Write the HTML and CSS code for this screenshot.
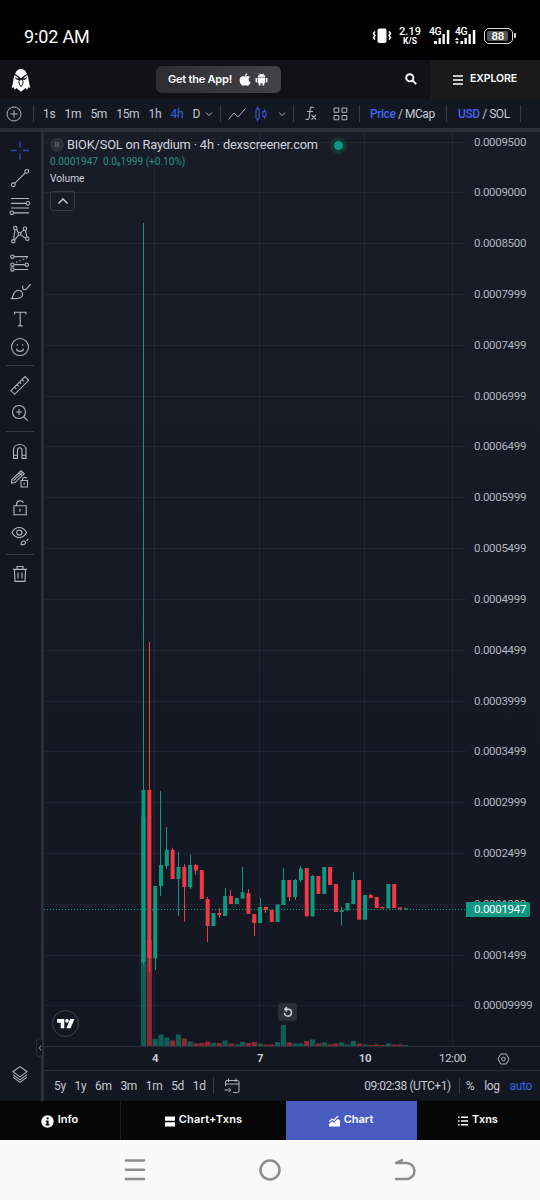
FILE: index.html
```html
<!DOCTYPE html>
<html lang="en">
<head>
    <meta charset="utf-8">
    <title>BIOK/SOL on Raydium - Chart</title>
    <link rel="stylesheet" href="styles.css">
</head>
<body>
    <div class="status-bar">
        <div class="clock">9:02 AM</div>
        <div class="status-icons">
            <svg class="vibrate" width="20" height="18" viewBox="0 0 20 18">
                <rect x="5.500" y="1.500" width="9" height="14.500" rx="2" fill="#fff"/>
                <path d="M3 4.500l-1.500 2 1.500 2-1.500 2 1.500 2M17 4.500l1.500 2-1.500 2 1.500 2-1.500 2" fill="none" stroke="#fff" stroke-width="1.500"/>
            </svg>
            <div class="speed"><b>2.19</b><span>K/S</span></div>
            <div class="signal">
                <span>4G</span>
                <svg width="22" height="18" viewBox="0 0 22 18" fill="#fff"><path d="M5 14h3v3H5zM9.500 11h2.300v6H9.500zM13.500 7h2.300v10h-2.300zM17.800 3h2.500v14h-2.500z"/></svg>
            </div>
            <div class="signal">
                <span>4G</span>
                <svg width="22" height="18" viewBox="0 0 22 18" fill="#fff"><path d="M0 13l2-2.500L4 13zM0 14.500h4L2 17zM5.500 14h2.500v3H5.500zM9.500 11h2.300v6H9.500zM13.500 7h2.300v10h-2.300zM17.800 3h2.500v14h-2.500z"/></svg>
            </div>
            <div class="battery"><span>88</span></div>
        </div>
    </div>

    <header class="header">
        <svg class="logo" width="20" height="24" viewBox="0 0 20 24">
            <path d="M4.500 5Q6 1 10 1t5.500 4l1.700 4.500L19.200 20l-2-.8-.9 2.500-2-1.700-1.500 1.500L10 23.700l-2.800-2.200L5.700 20l-2 1.700-.9-2.500-2 .8L2.800 9.500z" fill="#fff"/>
            <path d="M3.700 5.800L8.300 8.700 10 10.500l1.700-1.800 4.600-2.900-.3 1.500-3.300 2.400-.2.700 2.300-.5 1.200-1.200-.6 2.300-2.200 1-1.200-.2.600 2.200-.8 2.700L10 19.200l-1.800-2.500-.8-2.700.6-2.200-1.200.2-2.200-1L4 8.700l1.200 1.200 2.300.5-.2-.7L4 7.300z" fill="#111116"/>
            <path d="M10 11.400l1.500 1.800-.3 2.800L10 18l-1.200-2-.3-2.800z" fill="#fff"/>
        </svg>
        <div class="get-app">
            <span>Get the App!</span>
            <svg width="12" height="13" viewBox="0 0 12 13" fill="#fff">
                <path d="M8.300.2c.1 1.500-1 2.700-2.400 2.700C5.800 1.600 6.900.3 8.300.2zM6.200 3.600c.6 0 1.300-.6 2.400-.6 1 0 1.900.5 2.400 1.200-2.100 1.300-1.700 4.100.5 5-.5 1.500-1.700 3.500-2.900 3.500-.9 0-1.200-.5-2.300-.5s-1.400.5-2.200.5C2.500 12.700.6 9.700.6 7.200.6 4.700 2.100 3.200 3.800 3.200c1 0 1.700.4 2.400.4z"/>
            </svg>
            <svg width="13" height="13" viewBox="0 0 13 13" fill="#fff">
                <path d="M2.800 4.400C2.900 3 3.600 2.100 4.500 1.600L3.800.4l.4-.2.700 1.200c1-.4 2.200-.4 3.200 0L8.800.2l.4.2-.7 1.200c.9.500 1.600 1.400 1.700 2.800zM2.800 5h7.400v5.200h-1v2.200H7.500v-2.200h-2v2.200H3.800v-2.200h-1zM.6 5h1.500v4.300H.6zM10.900 5h1.500v4.300h-1.500z"/>
                <circle cx="4.900" cy="3" r=".45" fill="#35353b"/><circle cx="8.100" cy="3" r=".45" fill="#35353b"/>
            </svg>
        </div>
        <svg class="search" width="12" height="12" viewBox="0 0 12 12" fill="none" stroke="#fff" stroke-width="1.900">
            <circle cx="4.800" cy="4.800" r="3.600"/><path d="M7.500 7.500l3.700 3.700"/>
        </svg>
        <div class="explore">
            <svg width="10" height="10" viewBox="0 0 10 10" stroke="#fff" stroke-width="1.400"><path d="M0 1h10M0 5h10M0 9h10"/></svg>
            <span>EXPLORE</span>
        </div>
    </header>

    <div class="toolbar">
        <svg class="add" width="16" height="16" viewBox="0 0 16 16"><circle cx="8" cy="8" r="7"/><path d="M8 4.300v7.400M4.300 8h7.400"/></svg>
        <i class="sep"></i>
        <div class="intervals">
            <span>1s</span><span>1m</span><span>5m</span><span>15m</span><span>1h</span><span class="active">4h</span><span>D</span>
        </div>
        <svg class="chevron" width="8" height="6" viewBox="0 0 8 6"><path d="M1 1.500l3 3 3-3"/></svg>
        <i class="sep"></i>
        <svg class="line-type" width="18" height="14" viewBox="0 0 18 14"><path d="M.5 12.500L6 6l4 4 7.500-8.500"/></svg>
        <svg class="candle-type" width="12" height="16" viewBox="0 0 12 16"><path d="M1 3h3.200v10H1zM2.600.5V3M2.600 13v2.500M7.800 5.500H11v5H7.800zM9.400 3v2.500M9.400 10.500V13"/></svg>
        <svg class="chevron" width="8" height="6" viewBox="0 0 8 6"><path d="M1 1.500l3 3 3-3"/></svg>
        <i class="sep"></i>
        <svg class="fx" width="12" height="15" viewBox="0 0 12 15"><path d="M8.700 1.500C6.500.2 5.300 1.500 5.100 3.500L4.300 11c-.2 2.300-1.600 3.200-3.600 2M2 5.500h6M6.500 9l4.500 4.500M11 9l-4.500 4.500"/></svg>
        <svg class="layouts" width="15" height="14" viewBox="0 0 15 14"><path d="M1 1h4.800v4.300H1zM9 1h4.800v4.300H9zM1 8.500h4.800v4.300H1zM9 8.500h4.800v4.300H9z"/></svg>
        <i class="sep"></i>
        <div class="toggle price"><b>Price</b> / MCap</div>
        <i class="sep"></i>
        <div class="toggle currency"><b>USD</b> / SOL</div>
        <i class="sep"></i>
    </div>

    <main class="workspace">
        <aside class="tools">
            <svg class="cross" viewBox="0 0 28 28"><path d="M4.700 14.500h6M17 14.500h6M14 5.500v6M14 17.500v6M14 14.500h.5"/></svg>
            <svg viewBox="0 0 28 28"><path d="M8.700 19.300L19.300 8.700"/><circle cx="7.300" cy="20.700" r="1.900"/><circle cx="20.700" cy="7.300" r="1.900"/></svg>
            <svg viewBox="0 0 28 28"><path d="M5 6.500h18M5 11.300h15M5 16h18M7.700 20.800H23"/><circle cx="21.900" cy="11.300" r="1.800"/><circle cx="5.800" cy="20.800" r="1.800"/></svg>
            <svg viewBox="0 0 28 28"><path d="M7.500 19.500L9 10M10.500 9.500l2 3M14.800 12.500l3-2.700M19.400 10.500l1.500 6.500M8.500 20l4-5M14.800 14.800l5 3.500"/><circle cx="7.300" cy="21.300" r="1.700"/><circle cx="9.300" cy="8" r="1.700"/><circle cx="13.500" cy="13.700" r="1.500"/><circle cx="19" cy="8.700" r="1.700"/><circle cx="21.300" cy="18.700" r="1.700"/></svg>
            <svg viewBox="0 0 28 28"><path d="M8.300 7.600H22M8.300 15.600h10.500M8.300 20.400H22"/><path d="M10 13.500l11.500-5" stroke-dasharray="1.500 2.200"/><circle cx="6.400" cy="7.600" r="1.700"/><circle cx="6.400" cy="15.600" r="1.700"/><circle cx="6.400" cy="20.400" r="1.700"/><circle cx="20.700" cy="15.600" r="1.700"/></svg>
            <svg viewBox="0 0 28 28"><path d="M5.500 21.500c1.200-1 1.500-3 2.300-5 1.200-2.700 4-4 6.500-2.800 2.700 1.300 3 4.400 1 6.300-2 1.800-5.500 1.600-9.800 1.500zM16.500 8.500c-.2 3 1 4.500 3 4 1.500-.4 2.800-3.300 5-5.300"/></svg>
            <svg viewBox="0 0 28 28"><path d="M8.500 9.500V7.200h11.500v2.300M14.200 7.200v13.600M12 20.800h4.500"/></svg>
            <svg viewBox="0 0 28 28"><circle cx="14" cy="14" r="8.500"/><path d="M10.500 15.500c.5 3.700 6.500 3.700 7 0M11.300 11.300v1.500M16.700 11.300v1.500"/></svg>
            <hr>
            <svg viewBox="0 0 28 28"><path d="M5 19.500L19 5.500l3.700 3.700-14 14zM8.500 16l1.800 1.800M11 13.500l1.800 1.800M13.500 11l1.800 1.800M16 8.500l1.800 1.800"/></svg>
            <svg viewBox="0 0 28 28"><circle cx="13" cy="13" r="6.500"/><path d="M17.700 17.700l4 3.800M10 13h6M13 10v6"/></svg>
            <hr>
            <svg viewBox="0 0 28 28"><path d="M7.500 21.300V13c0-7.500 12.500-7.500 12.500 0v8.300h-4V13c0-3-4.500-3-4.500 0v8.300zM7.500 18.200h4M16 18.200h4"/></svg>
            <svg viewBox="0 0 28 28"><path d="M5.500 17l.4-3.500L15 4.700l3.200 3L9 16.500zM7.500 14.500l8.500-8M13 6.500l3.200 3M15 14.500h6.500V21H15zM16.500 14.500c-.2-4 3.500-4 4-2M18.200 16.700v2"/></svg>
            <svg viewBox="0 0 28 28"><path d="M8 11.700h12.200v9H8zM10.500 11.700c-.3-6 6-6 6.800-3M14 14.700v3"/></svg>
            <svg viewBox="0 0 28 28"><path d="M6 10.500C9.500 3.800 17 3.800 20.500 10.500 17 17.200 9.500 17.200 6 10.500zM15 22.500c0-3.500 3-4.500 4.500-2.500.5 2-1.500 2.700-4.500 2.500zM20.300 18.800l2.200-2"/><circle cx="13.300" cy="10.500" r="2.600"/></svg>
            <hr>
            <svg viewBox="0 0 28 28"><path d="M7 9.300h14M11 9V6.500h6V9M8.500 9.500L9 21.300h10l.5-11.800M12 12.500v6M16 12.500v6"/></svg>
            <svg class="layers" viewBox="0 0 28 28"><path d="M7 11.500L14 6.500l7 5-7 5.300zM7 14.500l7 5.300 7-5.300M7 17l7 5.300 7-5.300"/></svg>
        </aside>

        <section class="chart">
            <div class="pane">
                <svg id="plot" class="plot" width="422" height="914" viewBox="44 132 422 914"></svg>
                <div class="price-axis">
                    <span>0.0009500</span><span>0.0009000</span><span>0.0008500</span><span>0.0007999</span><span>0.0007499</span><span>0.0006999</span>
                    <span>0.0006499</span><span>0.0005999</span><span>0.0005499</span><span>0.0004999</span><span>0.0004499</span><span>0.0003999</span>
                    <span>0.0003499</span><span>0.0002999</span><span>0.0002499</span><span>0.0001999</span><span>0.0001499</span><span>0.00009999</span>
                    <div class="price-tag">0.0001947</div>
                </div>
                <div class="legend">
                    <div class="symbol"><em>B</em><span>BIOK/SOL on Raydium · 4h · dexscreener.com</span><i class="live"></i></div>
                    <div class="values"><span>0.0001947</span><span>0.0<small>6</small>1999 (+0.10%)</span></div>
                    <div class="study">Volume</div>
                    <div class="collapse"><svg width="12" height="8" viewBox="0 0 12 8"><path d="M1.500 6.500L6 2l4.500 4.500"/></svg></div>
                </div>
                <div class="tv-logo"><svg width="18" height="10" viewBox="0 0 18 10" fill="#fff"><path d="M0 0h7.300v9.300H3.700V3.700H0zM13.200 0h4.300l-4 9.300H9.300z"/><circle cx="10" cy="1.900" r="1.800"/></svg></div>
                <div class="reset"><svg width="12" height="12" viewBox="0 0 12 12"><path d="M3.200 3.200h3.500a3.500 3.500 0 1 1-4.200 3.500M5 1L2.800 3.200 5 5.400"/></svg></div>
                <div class="handle"><svg width="4" height="8" viewBox="0 0 4 8"><path d="M3 1.500L1.300 4 3 6.500"/></svg></div>
            </div>
            <div class="time-axis">
                <b>4</b><b>7</b><b>10</b><span>12:00</span>
                <svg width="13" height="12" viewBox="0 0 13 12"><path d="M3.700 1h5.600L12 6 9.300 11H3.700L1 6z"/><circle cx="6.500" cy="6" r="1.800"/></svg>
            </div>
            <div class="range-bar">
                <div class="ranges"><span>5y</span><span>1y</span><span>6m</span><span>3m</span><span>1m</span><span>5d</span><span>1d</span></div>
                <i class="sep"></i>
                <svg class="goto" width="16" height="16" viewBox="0 0 16 16"><path d="M1.500 8V4Q1.500 2.500 3 2.500h10.500Q15 2.500 15 4v9q0 1.500-1.500 1.500H9M1.500 6H15M4.500.5v3.500M12 .5v3.500M.5 12h6M4.500 9.800L6.700 12l-2.200 2.200"/></svg>
                <span class="time">09:02:38 (UTC+1)</span>
                <i class="sep"></i>
                <span class="percent">%</span>
                <span class="log">log</span>
                <span class="auto">auto</span>
            </div>
        </section>
    </main>

    <nav class="tabs">
        <div class="tab info">
            <svg width="13" height="13" viewBox="0 0 13 13"><circle cx="6.500" cy="6.500" r="6.200" fill="#fff"/><path d="M5.600 2.500h2v1.800h-2zM4.800 5.400h2.800v3.700h.8v1.300H4.700V9.100h.9V6.700h-.8z" fill="#060606"/></svg>
            <span>Info</span>
        </div>
        <div class="tab split">
            <svg width="10" height="11" viewBox="0 0 10 11" fill="#fff"><path d="M0 .5h10v4.300H0zM0 6.200h10v4.300H0z"/></svg>
            <span>Chart+Txns</span>
        </div>
        <div class="tab active">
            <svg width="11" height="11" viewBox="0 0 11 11"><path d="M.3 5.500L3 3l2 1.500L8 .9h1.500" fill="none" stroke="#fff" stroke-width="1.200"/><path d="M0 10.500V8l3-2.700 2 1.400L8.500 3l2.500 1.500v6z" fill="#fff"/></svg>
            <span>Chart</span>
        </div>
        <div class="tab txns">
            <svg width="10" height="10" viewBox="0 0 10 10" stroke="#fff" stroke-width="1.400"><path d="M0 1.300h1.600M3 1.300h7M0 5h1.600M3 5h7M0 8.700h1.600M3 8.700h7"/></svg>
            <span>Txns</span>
        </div>
    </nav>

    <div class="system-nav">
        <svg width="22" height="24" viewBox="0 0 22 24"><path d="M2 2.500h18M2 11.700h18M2 21h18"/></svg>
        <svg width="22" height="24" viewBox="0 0 22 24"><circle cx="11" cy="12" r="9.500"/></svg>
        <svg width="22" height="24" viewBox="0 0 22 24"><path d="M2 5h10.500a8 8 0 0 1 0 16H2M2 5l6-3"/></svg>
    </div>

    <script src="chart.js"></script>
</body>
</html>
```
FILE: styles.css
```css
* {
    box-sizing: border-box;
}

body {
    margin: 0;
    width: 540px;
    height: 1200px;
    display: flex;
    flex-direction: column;
    overflow: hidden;
    background: #131722;
    color: #c5c8d0;
    font-family: Roboto, sans-serif;
    font-size: 12px;
    letter-spacing: -0.35px;
}

svg {
    display: block;
    flex: none;
}

.sep {
    width: 1px;
    height: 17px;
    background: #363a45;
    flex: none;
}

/* phone status bar */
.status-bar {
    height: 60px;
    padding: 12px 24px 0 24px;
    background: #000;
    color: #fff;
    display: flex;
    justify-content: space-between;
    align-items: center;
}

.clock {
    font-size: 18px;
    letter-spacing: -0.15px;
}

.status-icons {
    display: flex;
    align-items: center;
    height: 20px;
}

.speed {
    display: flex;
    flex-direction: column;
    align-items: center;
    width: 22px;
    margin: -1px 8px 0 7px;
    line-height: 9px;
    font-size: 8.5px;
    font-weight: 700;
    letter-spacing: 0;
}

.speed b {
    font-size: 11px;
    font-weight: 500;
    line-height: 11px;
}

.signal {
    position: relative;
    width: 22px;
    margin-right: 4px;
}

.signal span {
    position: absolute;
    top: 0;
    left: 0;
    font-size: 10.5px;
    font-weight: 500;
    line-height: 10px;
    letter-spacing: -0.4px;
}

.battery {
    position: relative;
    width: 29px;
    height: 16px;
    margin: 0 3px 0 3px;
    padding: 1.5px;
    border: 1.5px solid #ddd;
    border-radius: 5px;
}

.battery span {
    display: block;
    height: 10px;
    width: 21px;
    padding-left: 5px;
    background: #555;
    border-radius: 2px;
    font-size: 11.5px;
    font-weight: 500;
    line-height: 10.5px;
}

.battery::after {
    content: "";
    position: absolute;
    right: -4px;
    top: 4px;
    width: 2px;
    height: 5px;
    background: #ddd;
    border-radius: 1px;
}

/* site header */
.header {
    height: 39px;
    background: #111116;
    display: flex;
    align-items: center;
    color: #fff;
    font-family: Inter, sans-serif;
    font-weight: 600;
}

.logo {
    margin-left: 11px;
}

.get-app {
    display: flex;
    align-items: center;
    width: 125px;
    height: 27px;
    margin-left: 125px;
    padding-left: 12px;
    background: linear-gradient(90deg, #2c2c31, #424247);
    border-radius: 6px;
    font-size: 11px;
    letter-spacing: -0.22px;
}

.get-app span {
    width: 71px;
    margin-top: -2px;
    white-space: nowrap;
}

.get-app svg + svg {
    margin-left: 4px;
}

.search {
    margin: -2px 0 0 124px;
}

.explore {
    display: flex;
    align-items: center;
    gap: 7px;
    width: 110px;
    height: 39px;
    margin-left: auto;
    padding-left: 23px;
    background: #1a1a1a;
    font-size: 10.5px;
    letter-spacing: -0.1px;
}

.explore svg {
    margin-top: 1px;
}

.explore span {
    margin-top: -2px;
}

/* chart toolbar */
.toolbar {
    height: 33px;
    padding-bottom: 3px;
    border-bottom: 4px solid #2a2e39;
    display: flex;
    align-items: center;
    white-space: nowrap;
}

.toolbar svg {
    fill: none;
    stroke: #b2b5be;
}

.toolbar > * {
    margin-top: 3px;
}

.toolbar .add {
    margin-left: 6px;
    margin-right: 11px;
}

.intervals {
    display: flex;
    gap: 9.3px;
    width: 154px;
    margin-left: 9px;
}

.intervals .active {
    color: #3560e0;
}

.toolbar .chevron {
    margin-left: 8px;
    margin-right: 7px;
}

.toolbar .line-type {
    margin-left: 7px;
    margin-right: 9px;
}

.toolbar .candle-type {
    margin-right: 3px;
    stroke: #3560e0;
}

.toolbar .fx {
    margin-left: 11px;
    margin-right: 16px;
    stroke-width: 1.1;
}

.layouts {
    margin-right: 11px;
}

.toggle {
    letter-spacing: -0.45px;
}

.toggle b {
    color: #3d66ee;
    font-weight: 500;
}

.price {
    width: 75px;
    margin-left: 10px;
    padding-right: 1px;
}

.currency {
    width: 62px;
    margin-left: 11px;
}

.price + .sep {
    margin-left: 1px;
}

/* drawing tools */
.workspace {
    height: 969px;
    display: flex;
}

.tools {
    width: 44px;
    padding: 4px 1px 13px 0;
    border-right: 3px solid #2a2e39;
    display: flex;
    flex-direction: column;
    align-items: center;
}

.tools svg {
    width: 28px;
    height: 28.15px;
    fill: none;
    stroke: #b2b5be;
    stroke-width: 1.1;
}

.tools .cross {
    stroke: #2f4aa8;
    stroke-width: 1.4;
}

.tools hr {
    width: 28px;
    height: 1px;
    margin: 4px 0 5px;
    border: 0;
    background: #363a45;
}

.tools .layers {
    margin-top: auto;
}

/* chart */
.chart {
    width: 496px;
    display: flex;
    flex-direction: column;
}

.pane {
    position: relative;
    height: 915px;
    display: flex;
    background: linear-gradient(#181c27, #131722);
    border-bottom: 1px solid #2a2e39;
}

.grid {
    stroke: rgba(240, 243, 250, 0.055);
}

.up {
    fill: #0d9981;
}

.down {
    fill: #f23645;
}

.volume {
    opacity: 0.55;
}

.price-line {
    stroke: #0d9981;
    stroke-dasharray: 1 2;
}

.price-axis {
    position: relative;
    width: 74px;
    padding: 1.6px 0 32.4px 8px;
    display: flex;
    flex-direction: column;
    justify-content: space-between;
    font-size: 11.5px;
    line-height: 16px;
    letter-spacing: -0.29px;
    color: #b2b5be;
}

.price-tag {
    position: absolute;
    left: 0;
    top: 770px;
    width: 64px;
    height: 15px;
    padding-left: 8px;
    background: #0d9981;
    border-radius: 0 2px 2px 0;
    color: #fff;
    line-height: 15px;
}

.legend {
    position: absolute;
    left: 6px;
    top: 4px;
}

.symbol {
    display: flex;
    align-items: center;
    height: 17px;
    font-size: 12.8px;
    letter-spacing: -0.17px;
    color: #d1d4dc;
    white-space: nowrap;
}

.symbol em {
    width: 14px;
    height: 14px;
    margin-right: 3px;
    border-radius: 50%;
    background: #2c2f38;
    color: #666a75;
    font-size: 8px;
    font-style: normal;
    line-height: 14px;
    text-align: center;
}

.live {
    width: 17px;
    height: 17px;
    margin: 1px 0 0 12px;
    border: 4.5px solid #17352f;
    border-radius: 50%;
    background: #0d9981;
}

.values {
    display: flex;
    gap: 5px;
    height: 16px;
    margin-top: 1px;
    font-size: 10.2px;
    line-height: 16px;
    letter-spacing: -0.05px;
    color: #249280;
}

.values small {
    font-size: 6px;
    font-weight: 700;
    vertical-align: -1px;
}

.study {
    height: 16px;
    font-size: 10.2px;
    line-height: 17px;
    letter-spacing: 0;
    color: #d1d4dc;
}

.collapse {
    display: flex;
    align-items: center;
    justify-content: center;
    width: 25px;
    height: 20px;
    margin-top: 5px;
    border: 1px solid #363a45;
    border-radius: 3px;
}

.collapse svg,
.reset svg {
    fill: none;
    stroke: #d1d4dc;
    stroke-width: 1.4;
}

.tv-logo {
    position: absolute;
    left: 8px;
    top: 878px;
    display: flex;
    align-items: center;
    justify-content: center;
    width: 27px;
    height: 27px;
    border: 1px solid #434651;
    border-radius: 50%;
}

.reset {
    position: absolute;
    left: 234px;
    top: 871px;
    display: flex;
    align-items: center;
    justify-content: center;
    width: 19px;
    height: 18px;
    border-radius: 3px;
    background: #2a2e39;
}

.handle {
    position: absolute;
    left: -8px;
    top: 906px;
    display: flex;
    align-items: center;
    justify-content: center;
    width: 7px;
    height: 19px;
    border: 1px solid #2a2e39;
    border-radius: 3px 0 0 3px;
    background: #131722;
}

.handle svg {
    fill: none;
    stroke: #9598a1;
}

/* label columns are centred on the vertical grid lines */
.time-axis {
    height: 24px;
    display: grid;
    grid-template-columns: 42px 168px 42px 133px 13px;
    align-items: center;
    justify-items: center;
    padding: 0 0 2px 90px;
    border-bottom: 1px solid #2a2e39;
    font-size: 11.5px;
}

.time-axis svg {
    margin: 3px 0 0 -44px;
}

.time-axis svg,
.goto {
    fill: none;
    stroke: #b2b5be;
}

.range-bar {
    flex: 1;
    display: flex;
    align-items: center;
    padding: 0 0 1px 10px;
    white-space: nowrap;
}

.ranges {
    display: flex;
    gap: 8.8px;
    width: 159px;
}

.goto {
    margin: 0 auto 0 10px;
}

.time {
    margin-right: 8px;
    letter-spacing: -0.45px;
}

.percent {
    margin-left: 6px;
}

.log {
    margin-left: 10px;
}

.auto {
    margin: 0 8px 0 10px;
    color: #3560e0;
}

/* bottom tabs */
.tabs {
    height: 39px;
    display: grid;
    grid-template-columns: 121px 165px 131px 123px;
    background: #060606;
    color: #fff;
    font-family: Inter, sans-serif;
    font-size: 11px;
    font-weight: 600;
    letter-spacing: 0;
}

.tab {
    display: flex;
    align-items: center;
    justify-content: center;
    gap: 4px;
    padding: 0 1px 3px 0;
}

.tab svg {
    margin-top: 4px;
}

.info {
    border-right: 1px solid #1c1c1c;
}

.split {
    padding-right: 0;
    letter-spacing: 0.18px;
}

.tab.active {
    background: #485cc0;
}

/* phone navigation */
.system-nav {
    flex: 1;
    display: flex;
    justify-content: center;
    align-items: center;
    gap: 113px;
    background: #f9f9f9;
}

.system-nav svg {
    fill: none;
    stroke: #8c8c8c;
    stroke-width: 2.5;
    stroke-linecap: round;
}
```
FILE: chart.js
```js
const plot = document.getElementById('plot');
const START = 143.5;
const STEP = 5.83;
const BASE = 1046;

// direction, high, body top, body bottom, low, volume height
const candles = [
    ['up', 223, 790, 962, 965, 229], ['down', 642, 790, 958, 972, 106],
    ['up', 886, 886, 958.5, 970, 7], ['up', 791, 865, 886, 896, 11.5],
    ['up', 827, 849.7, 866, 869, 8.5], ['down', 847.7, 849.7, 879, 879, 5.5],
    ['up', 851.7, 867, 879, 916, 11.5], ['down', 864, 867, 887, 921.7, 7.5],
    ['up', 854.7, 865, 887, 889, 4.5], ['down', 864, 865, 870.7, 875, 2.5],
    ['down', 870, 870, 899, 899, 3], ['down', 897, 899, 926, 942, 4.5],
    ['up', 913, 913, 926, 926, 3], ['down', 908, 913, 915, 917.7, 3],
    ['up', 888, 896, 916, 916, 5.5], ['down', 890, 896, 904, 904, 2.5],
    ['up', 898, 898, 904, 904, 1.5], ['up', 867, 892.3, 898.5, 898.5, 4],
    ['down', 889, 893, 914, 914, 3], ['down', 914, 914, 923, 936, 4],
    ['up', 898, 907, 923, 923, 2.5], ['down', 907, 907, 910, 913, 1.5],
    ['down', 910, 910, 922, 922, 1.5], ['up', 904.5, 904.5, 922, 922, 4],
    ['up', 868, 880, 905, 905, 21], ['down', 880, 880, 897, 901, 3.5],
    ['up', 879, 880, 897, 900, 2.5], ['up', 866, 868.5, 880, 882, 2.5],
    ['down', 868, 868, 916.3, 916.3, 5], ['up', 875, 876, 916.3, 916.3, 6.5],
    ['down', 876, 876, 894, 894, 2.5], ['up', 867, 867, 894, 894, 3.5],
    ['down', 867, 867, 885, 885, 1.5], ['down', 884, 884, 912, 912, 2.5],
    ['up', 906.5, 910, 912, 925.5, 3.5], ['up', 903, 903, 910.5, 910.5, 1.5],
    ['up', 871.7, 880, 904, 904, 5], ['down', 880, 880, 919.7, 919.7, 2.5],
    ['up', 895, 895, 919.7, 919.7, 1.5], ['down', 894, 895, 898, 898, 1],
    ['down', 897, 897, 908, 908, 1.5], ['down', 907, 907, 908.3, 908.3, 1],
    ['up', 884, 884, 908.3, 908.3, 2.5], ['down', 884, 884, 908, 908, 1.5],
    ['down', 907.5, 907.5, 909.3, 910.3, 1.5], ['up', 907.5, 908.5, 909.5, 909.5, 1]
];

function rect(cls, x, y, w, h) {
    return `<rect class="${cls}" x="${x}" y="${y}" width="${w}" height="${h}"/>`;
}

function line(cls, x1, y1, x2, y2) {
    return `<line class="${cls}" x1="${x1}" y1="${y1}" x2="${x2}" y2="${y2}"/>`;
}

let out = '';

for (let i = 0; i < 18; i++) {
    const y = Math.round(141.5 + i * 50.82) + 0.5;
    out += line('grid', 44, y, 466, y);
}
[154.5, 259.5, 364.5, 452.5].forEach(x => {
    out += line('grid', x, 132, x, BASE);
});

candles.forEach((c, i) => {
    const x = START + i * STEP;
    out += rect(c[0] + ' volume', x - 2.6, BASE - c[5], 5.2, c[5]);
});
candles.forEach((c, i) => {
    const x = START + i * STEP;
    // wicks snap to whole pixels so they stay sharp
    out += rect(c[0], Math.round(x - 0.5), c[1], 1, c[4] - c[1]);
    out += rect(c[0], x - 2, c[2], 4, c[3] - c[2]);
});

out += line('price-line', 44, 909.5, 466, 909.5);
plot.innerHTML = out;
```
